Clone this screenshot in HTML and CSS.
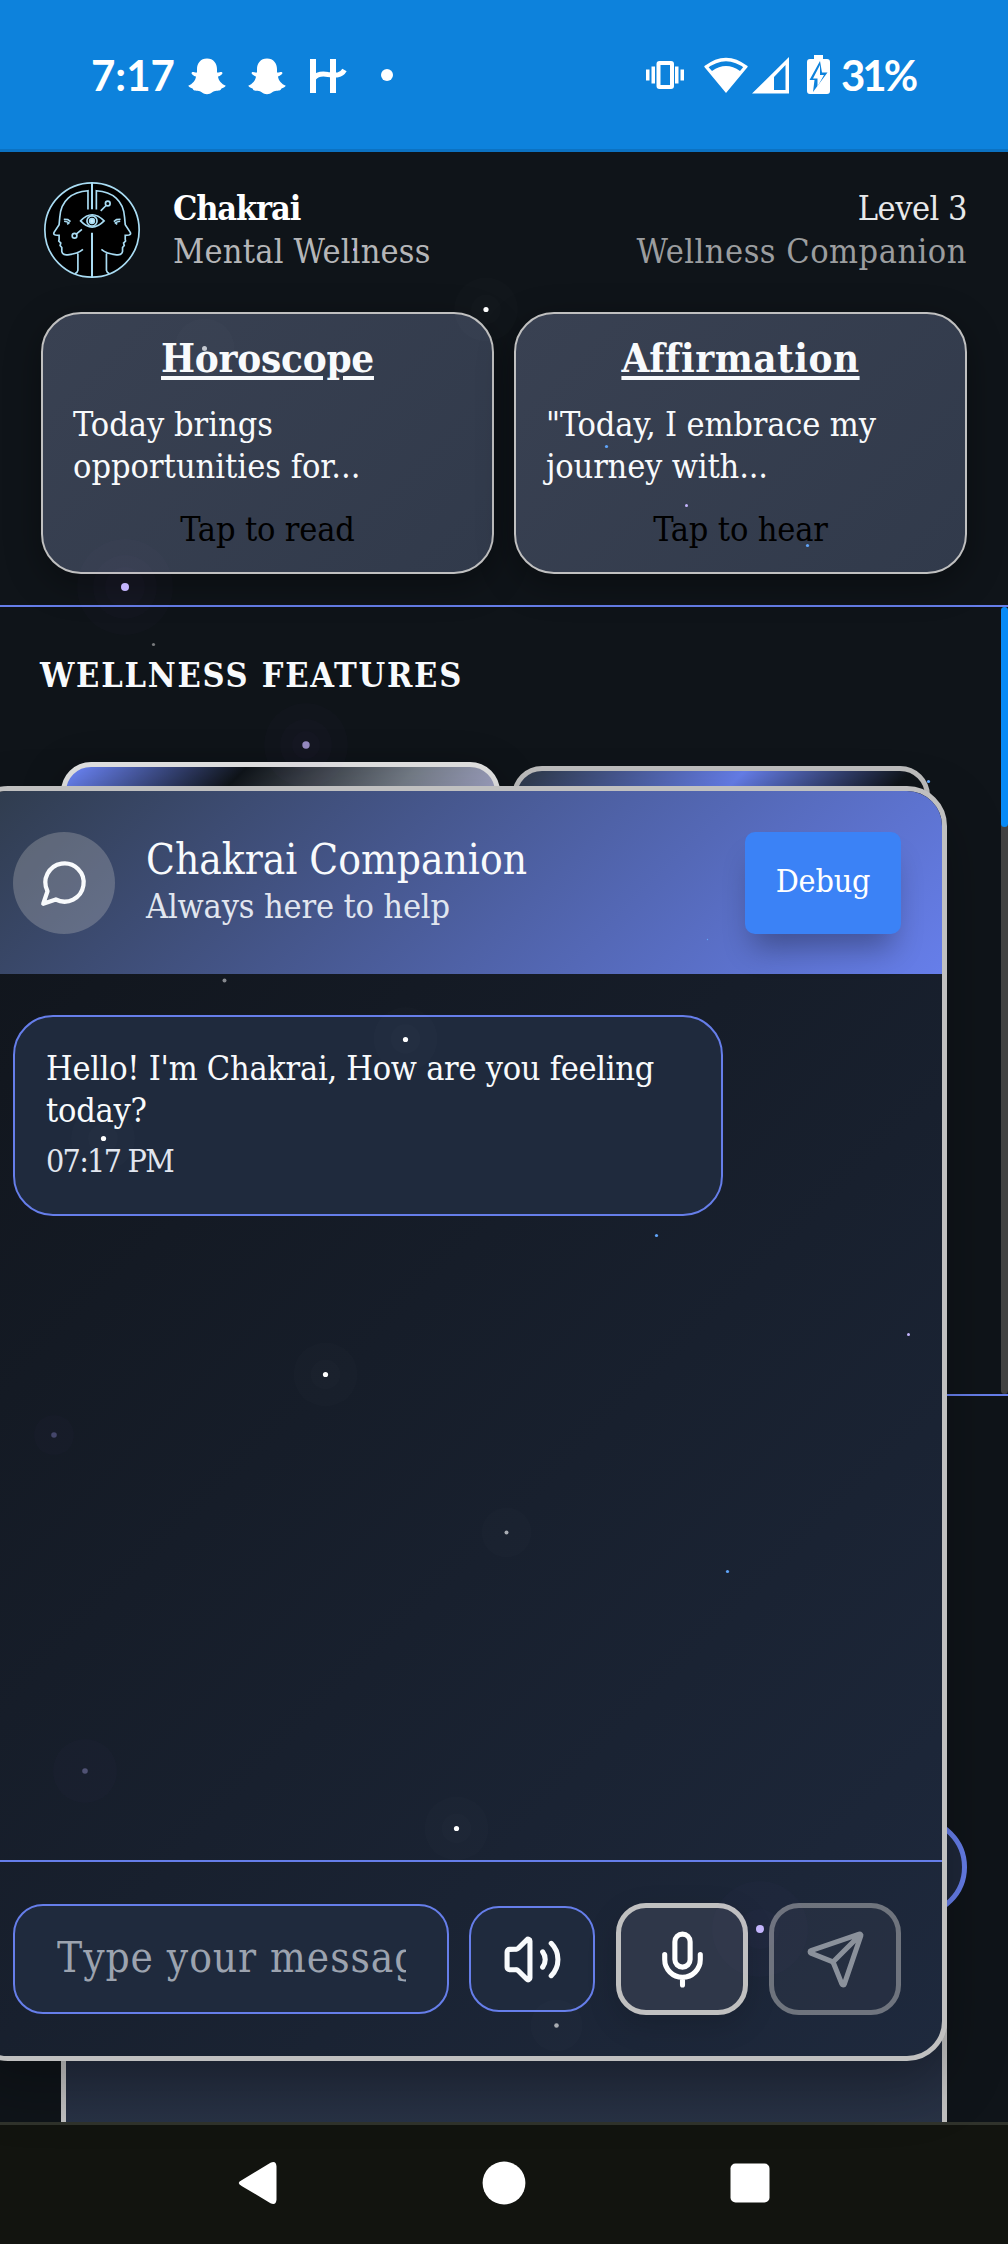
FILE: index.html
```html
<!DOCTYPE html>
<html lang="en">
<head>
<meta charset="utf-8">
<title>Chakrai</title>
<link rel="stylesheet" href="styles.css">
</head>
<body>
<div class="status-bar">
  <span class="clock">7:17</span>
  <svg class="status-left" viewBox="186 50 214 52" width="214" height="52" fill="#fff">
    <g id="ghost"><path d="M207 59.500C200.500 59.500 197 64.500 197 70V73.500C195 73.800 193 72.500 192 73.200C190.500 74.500 193 76.500 196 77.500C195.500 81.500 192.500 85 188.200 86.800C189.500 88.800 192 89 192.800 89.800C193.300 91.500 194 91.700 197.500 91.700C201 91.700 203 95.200 207 95.200S213 91.700 216.500 91.700C220 91.700 220.700 91.500 221.200 89.800C222 89 224.500 88.800 225.800 86.800C221.500 85 218.500 81.500 218 77.500C221 76.500 223.500 74.500 222 73.200C221 72.500 219 73.800 217 73.500V70C217 64.500 213.500 59.500 207 59.500Z"/></g>
    <use href="#ghost" x="60"/>
    <path d="M310 60h6v34h-6zM330 60h6v34h-6z"/>
    <path d="M314 79C317 75 322 74.500 328 75.500C336 76.500 341 77 344.500 71" fill="none" stroke="#fff" stroke-width="5"/>
    <circle cx="387" cy="76" r="6"/>
  </svg>
  <svg class="status-right" viewBox="640 50 194 52" width="194" height="52" fill="#fff">
    <path d="M646 70.500h3.500v11H646zM651.500 67.500h3.500v17h-3.500zM675 67.500h3.500v17H675zM680.500 70.500h3.500v11h-3.500z"/>
    <rect x="658.500" y="64" width="13.500" height="24" rx="1" fill="none" stroke="#fff" stroke-width="4"/>
    <path d="M705.500 68.500Q726 52.500 746.500 68.500" fill="none" stroke="#fff" stroke-width="3.500"/>
    <path d="M704 67.500L726 94L748 67.500L744.500 66.500L740 72Q726 62 712 72L707 66.500Z"/>
    <path fill-rule="evenodd" d="M752 94.500L789 58V94.500ZM774 78V91H785.500V66Z"/>
    <path fill-rule="evenodd" d="M814 56h9v4h4q3 0 3 3v29q0 3-3 3h-17q-3 0-3-3V63q0-3 3-3h4zM820 62L809.500 81H814.500L813 93L827.500 73.500H822Z"/>
    <path d="M820 66L813 79.500H817.500V87.500L824 76H820Z"/>
  </svg>
  <span class="battery">31%</span>
</div>

<div class="app">
  <header class="profile">
    <svg class="avatar" viewBox="42 37 286 286" fill="none" stroke="#a9dcf3" stroke-width="5">
      <circle cx="185" cy="180" r="140.500" fill="#000"/>
      <path stroke-width="6" d="M185 40V118M185 188V320"/>
      <path id="face" d="M173 119V63C125 66 92 92 89 142L87 164L72 187Q69 193 76 195L87 196V208L86 213L92 219L90 226L95 232V244Q97 256 113 254Q143 251 158 238M143 250V300Q142 306 134 310M101 148L113 149L121 155M102 154Q112 155 116 159L111 163"/>
      <use href="#face" transform="translate(371 0) scale(-1 1)"/>
      <path d="M151 153Q185 116 221 153Q185 190 151 153Z"/>
      <circle cx="185" cy="153" r="15"/>
      <circle cx="185" cy="153" r="7" fill="#c8ecfb"/>
      <circle cx="232" cy="101" r="7"/>
      <path d="M227 107L211 123M155 178L138 192"/>
      <circle cx="133" cy="197" r="7"/>
    </svg>
    <div class="brand">
      <div class="brand-name">Chakrai</div>
      <div class="brand-sub">Mental Wellness</div>
    </div>
    <div class="level">
      <div class="level-name">Level 3</div>
      <div class="level-sub">Wellness Companion</div>
    </div>
  </header>

  <div class="daily">
    <div class="daily-card">
      <h2 class="daily-title horoscope">Horoscope</h2>
      <p class="daily-text">Today brings<br>opportunities for...</p>
      <p class="daily-tap">Tap to read</p>
    </div>
    <div class="daily-card">
      <h2 class="daily-title affirmation">Affirmation</h2>
      <p class="daily-text tight">"Today, I embrace my<br>journey with...</p>
      <p class="daily-tap">Tap to hear</p>
    </div>
  </div>

  <section class="features">
    <h3 class="features-title">WELLNESS FEATURES</h3>
    <div class="feature-row">
      <div class="feature-card first"></div>
      <div class="feature-card second"></div>
    </div>
    <div class="scrollbar"><div class="thumb"></div></div>
  </section>

  <section class="lower">
    <div class="round-button"></div>
    <div class="lower-card"></div>
  </section>
</div>

<div class="chat">
  <div class="chat-header">
    <div class="chat-icon">
      <svg viewBox="0 0 24 24" width="51" height="51" class="line-icon"><path d="M7.900 20A9 9 0 1 0 4 16.100L2 22Z"/></svg>
    </div>
    <div class="chat-heading">
      <div class="chat-title">Chakrai Companion</div>
      <div class="chat-sub">Always here to help</div>
    </div>
    <button class="debug">Debug</button>
  </div>
  <div class="messages">
    <div class="bubble">
      <p class="bubble-text">Hello! I'm Chakrai, How are you feeling<br>today?</p>
      <p class="bubble-time">07:17 PM</p>
    </div>
  </div>
  <div class="composer">
    <div class="field"><span class="placeholder">Type your message...</span></div>
    <button class="tool sound"><svg viewBox="0 0 24 24" width="61" height="61" class="line-icon"><path d="M11 4.702a.705.705 0 0 0-1.203-.498L6.413 7.587A1.400 1.400 0 0 1 5.416 8H3a1 1 0 0 0-1 1v6a1 1 0 0 0 1 1h2.416a1.400 1.400 0 0 1 .997.413l3.383 3.384A.705.705 0 0 0 11 19.298zM16 9a5 5 0 0 1 0 6M19.364 18.364a9 9 0 0 0 0-12.728"/></svg></button>
    <button class="tool mic"><svg viewBox="0 0 24 24" width="61" height="61" class="line-icon"><rect x="9" y="2" width="6" height="13" rx="3"/><path d="M19 10v2a7 7 0 0 1-14 0v-2M12 19v3"/></svg></button>
    <button class="tool send"><svg viewBox="0 0 24 24" width="61" height="61" class="line-icon"><path d="M14.536 21.686a.5.5 0 0 0 .937-.024l6.500-19a.496.496 0 0 0-.635-.635l-19 6.500a.5.5 0 0 0-.024.937l7.930 3.180a2 2 0 0 1 1.112 1.110zM21.854 2.147l-10.940 10.939"/></svg></button>
  </div>
</div>

<svg class="stars" viewBox="0 0 1008 2244" width="1008" height="2244">
  <g fill="#fff" fill-opacity=".012">
    <circle cx="486" cy="309.500" r="32"/><circle cx="486" cy="309.500" r="15"/>
    <circle cx="204.500" cy="348.500" r="30"/>
    <circle cx="405.500" cy="1039" r="32"/><circle cx="405.500" cy="1039" r="15"/>
    <circle cx="103" cy="1138.500" r="32"/><circle cx="103" cy="1138.500" r="15"/>
    <circle cx="325.500" cy="1374.500" r="32"/><circle cx="325.500" cy="1374.500" r="15"/>
    <circle cx="506.500" cy="1532.500" r="25"/>
    <circle cx="456.500" cy="1828.500" r="32"/><circle cx="456.500" cy="1828.500" r="15"/>
    <circle cx="556.500" cy="2025.500" r="26"/>
  </g>
  <g fill="#a78bfa" fill-opacity=".014">
    <circle cx="125" cy="587" r="48"/><circle cx="125" cy="587" r="32"/><circle cx="125" cy="587" r="20"/>
    <circle cx="306" cy="745" r="42"/><circle cx="306" cy="745" r="26"/><circle cx="306" cy="745" r="14"/>
    <circle cx="760" cy="1929" r="48"/><circle cx="760" cy="1929" r="20"/>
    <circle cx="54" cy="1435" r="20"/><circle cx="85" cy="1771" r="32"/>
  </g>
  <g fill="#fff">
    <circle cx="486" cy="309.500" r="2.600"/><circle cx="405.500" cy="1039.500" r="2.600"/>
    <circle cx="103.500" cy="1138.500" r="2.600"/><circle cx="325.500" cy="1374.500" r="2.600"/>
    <circle cx="456.500" cy="1828.500" r="2.600"/>
  </g>
  <g fill="#a9adb3">
    <circle cx="204.500" cy="348.500" r="2.500" fill="#c5c9d0"/><circle cx="153.500" cy="644.500" r="1.600" fill="#77797c"/>
    <circle cx="224.500" cy="980.500" r="2" fill="#85888e"/><circle cx="506.500" cy="1532.500" r="2"/>
    <circle cx="556.500" cy="2025.500" r="2.300"/>
  </g>
  <g fill="#c4b5fd">
    <circle cx="125" cy="587" r="4"/><circle cx="760" cy="1929" r="4"/>
    <circle cx="306" cy="745" r="3.700" fill="#9488be"/>
    <circle cx="54" cy="1435" r="2.800" fill="#44466a"/><circle cx="85" cy="1771" r="2.800" fill="#505274"/>
    <circle cx="354.500" cy="249.500" r="1.500"/><circle cx="686.500" cy="505.500" r="1.500"/><circle cx="908.500" cy="1334.500" r="1.500"/>
  </g>
  <g fill="#60a5fa">
    <circle cx="606.500" cy="446.500" r="1.600"/><circle cx="807.500" cy="545.500" r="1.600"/>
    <circle cx="928.500" cy="781.500" r="1.600"/><circle cx="656.500" cy="1235.500" r="1.600"/>
    <circle cx="727.500" cy="1571.500" r="1.600"/><circle cx="707.500" cy="939.500" r=".7"/>
  </g>
</svg>

<nav class="nav-bar">
  <svg viewBox="0 0 44 44" width="44" height="44"><path d="M5.500 18.800L34 1.500Q39.500-1 40 5V38.500Q39.500 44.500 34 42L5.500 25Q-1 21.700 5.500 18.800Z" transform="translate(.5 .2)"/></svg>
  <svg viewBox="0 0 44 44" width="44" height="44"><circle cx="22" cy="22" r="21.400"/></svg>
  <svg viewBox="0 0 44 44" width="44" height="44"><rect x="2.500" y="2.500" width="39" height="39" rx="5"/></svg>
</nav>
</body>
</html>
```
FILE: styles.css
```css
* { box-sizing: border-box; }

body {
  position: relative;
  display: flex;
  flex-direction: column;
  width: 1008px;
  height: 2244px;
  margin: 0;
  overflow: hidden;
  background: #0f1419;
  color: #f8fafc;
  font-family: "DejaVu Serif Condensed", "DejaVu Serif", serif;
  font-size: 34px;
  line-height: 43px;
}

h2, h3, p { margin: 0; }
button { padding: 0; font-family: inherit; color: inherit; }

.line-icon {
  fill: none;
  stroke: currentColor;
  stroke-width: 2;
  stroke-linecap: round;
  stroke-linejoin: round;
}

.status-bar {
  flex: none;
  display: flex;
  align-items: center;
  height: 152px;
  padding: 0 85px 0 91px;
  border-bottom: 3px solid #0b72c2;
  background: #0d82dc;
  color: #fff;
  font: 700 42px/50px Lato, sans-serif;
}
.clock { width: 95px; }
.status-right { margin-left: auto; }
.battery { width: 89px; padding-left: 7px; letter-spacing: -3px; white-space: nowrap; }

.app {
  flex: none;
  display: flex;
  flex-direction: column;
  height: 1970px;
  overflow: hidden;
}

.profile {
  flex: none;
  display: flex;
  align-items: center;
  height: 126px;
  padding: 30px 41px 0 44px;
}
.avatar { width: 96px; height: 96px; }
.brand { margin-left: 33px; }
.brand-name { color: #fff; font-weight: 700; letter-spacing: -1.15px; }
.brand-sub { color: #b5b6b8; letter-spacing: .2px; }
.level { margin-left: auto; text-align: right; }
.level-name { color: #e8e9ea; letter-spacing: -.5px; }
.level-sub { color: #9b9d9f; letter-spacing: .5px; }

.daily {
  flex: none;
  display: grid;
  grid-template-columns: 1fr 1fr;
  gap: 20px;
  height: 329px;
  padding: 34px 41px 31px;
  border-bottom: 2px solid #667eea;
}
.daily-card {
  height: 262px;
  padding: 18px 30px 0;
  border: 2px solid #c0c0c0;
  border-radius: 40px;
  background: linear-gradient(135deg, #394152, #313a4b);
  box-shadow: 0 10px 35px rgba(0, 0, 0, .35);
}
.daily-title {
  text-align: center;
  text-decoration: underline;
  text-decoration-thickness: 4px;
  text-underline-offset: 4px;
  font-size: 40px;
  line-height: 51px;
}
.horoscope { letter-spacing: -.25px; }
.affirmation { letter-spacing: .5px; }
.daily-text { margin-top: 20px; line-height: 42px; }
.tight { letter-spacing: -.15px; }
.daily-tap { margin-top: 21px; color: #000; text-align: center; letter-spacing: -.15px; }

.features {
  flex: none;
  position: relative;
  height: 789px;
  padding: 47px 78px 0 61px;
  border-bottom: 2px solid #667eea;
}
.features-title {
  margin-left: -21px;
  font-size: 34px;
  letter-spacing: 1.75px;
}
.feature-row {
  display: flex;
  gap: 12px;
  margin-top: 65px;
}
.feature-card {
  height: 420px;
  border: 5px solid #bdbdbd;
  border-radius: 30px;
}
.first {
  width: 439px;
  border-color: #e0e0e0;
  background: linear-gradient(135deg, #667eea 12px, #0f1419 128px, #747c87 250px, #9a9dbc 315px);
  box-shadow: 0 10px 40px rgba(0, 0, 0, .3);
}
.second {
  width: 418px;
  margin-top: 4px;
  background: linear-gradient(135deg, #313d52 15px, #667eea 161px, #0f1419 279px);
}
.scrollbar {
  position: absolute;
  top: 0;
  right: 0;
  width: 7px;
  height: 787px;
  border-radius: 4px;
  background: #424242;
}
.thumb { height: 220px; border-radius: 4px; background: #078af6; }

.lower { flex: none; width: 1008px; padding: 421px 41px 0 61px; }
.round-button {
  width: 100px;
  height: 100px;
  margin-left: auto;
  border: 5px solid #667eea;
  border-radius: 50%;
  background: #1e2739;
}
.lower-card {
  width: 886px;
  height: 300px;
  border: 5px solid #c0c0c0;
  background: linear-gradient(#222b3d 45%, #303b4f);
}

.chat {
  position: absolute;
  left: -32px;
  top: 786px;
  display: flex;
  flex-direction: column;
  width: 979px;
  height: 1275px;
  overflow: hidden;
  border: 5px solid #c0c0c0;
  border-radius: 40px;
  background: linear-gradient(135deg, #10141a, #1e293d);
  box-shadow: 0 25px 60px rgba(0, 0, 0, .25);
}
.chat-header {
  flex: none;
  display: flex;
  align-items: center;
  height: 183px;
  padding: 0 41px 0 40px;
  background: linear-gradient(135deg, #2f3b4b, #667eea);
}
.chat-icon {
  display: grid;
  place-items: center;
  width: 102px;
  height: 102px;
  border-radius: 50%;
  background: rgba(192, 192, 192, .3);
}
.chat-heading { margin-left: 31px; padding-bottom: 3px; }
.chat-title { font-size: 42px; line-height: 50px; }
.chat-sub { color: #e1e6ef; letter-spacing: -.15px; }
.debug {
  width: 156px;
  height: 102px;
  margin-left: auto;
  padding-bottom: 4px;
  border: 0;
  border-radius: 10px;
  background: #3b82f6;
  color: #fff;
  font-size: 32px;
  letter-spacing: -.2px;
  box-shadow: 0 22px 30px -8px rgba(0, 0, 0, .3);
}

.messages { flex: 1; padding: 41px 40px 0; }
.bubble {
  width: 710px;
  height: 201px;
  padding: 30px 31px 0;
  border: 2px solid #667eea;
  border-radius: 40px;
  background: #1f2a3d;
}
.bubble-text { line-height: 42px; letter-spacing: -.28px; white-space: nowrap; }
.bubble-time {
  margin-top: 10px;
  color: #e1e6ef;
  font-size: 32px;
  line-height: 40px;
  letter-spacing: -1.75px;
}

.composer {
  flex: none;
  display: flex;
  align-items: center;
  height: 196px;
  padding: 0 41px 0 40px;
  border-top: 2px solid #667eea;
}
.field {
  width: 436px;
  height: 110px;
  margin-right: 20px;
  padding: 0 41px 0 42px;
  border: 2px solid #667eea;
  border-radius: 30px;
  background: #1f2a3d;
}
.placeholder {
  display: block;
  overflow: hidden;
  color: #9ca3af;
  font-size: 42px;
  line-height: 104px;
  letter-spacing: .95px;
  white-space: nowrap;
}
.tool {
  display: grid;
  place-items: center;
  border: 5px solid #c0c0c0;
  border-radius: 30px;
  background: #2f3749;
}
.sound {
  width: 126px;
  height: 106px;
  border: 2px solid #667eea;
  background: #1f2a3d;
}
.mic, .send { width: 132px; height: 112px; margin-left: 21px; }
.mic { color: #fff; box-shadow: 0 10px 30px rgba(0, 0, 0, .15); }
.send { opacity: .5; }

.stars {
  position: absolute;
  left: 0;
  top: 0;
  pointer-events: none;
}

.nav-bar {
  flex: none;
  display: flex;
  align-items: center;
  justify-content: center;
  gap: 202px;
  height: 122px;
  padding: 0 1px 3px 0;
  border-top: 3px solid #30332c;
  background: #12140f;
  fill: #fff;
}
```
